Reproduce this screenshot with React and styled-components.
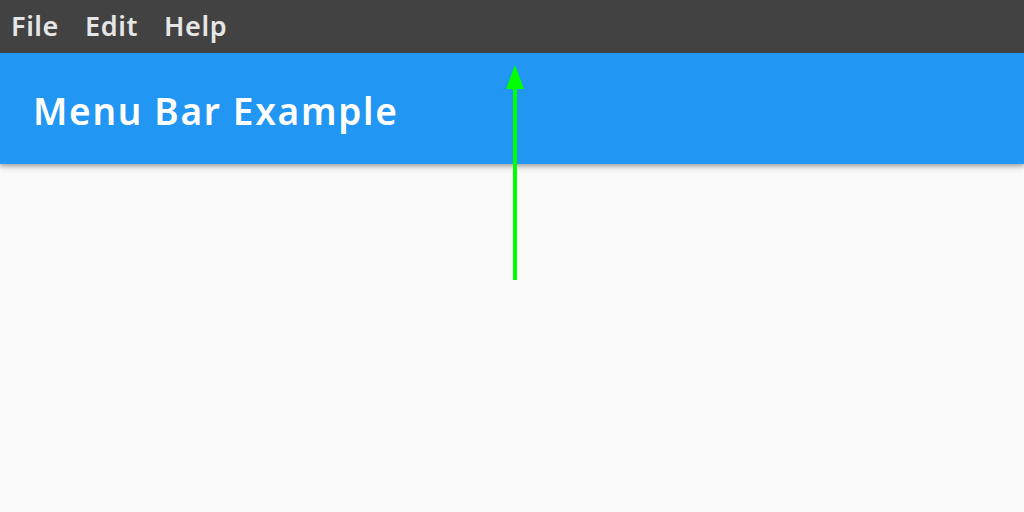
import React from 'react';
import styled, { createGlobalStyle } from 'styled-components';

const GlobalStyle = createGlobalStyle`
  html, body {
    margin: 0;
    padding: 0;
    background: #fafafa;
    font-family: "Noto Sans", "Open Sans", sans-serif;
  }
`;

const Page = styled.div`
  position: relative;
  width: 1024px;
  height: 512px;
  overflow: hidden;
  display: flex;
  flex-direction: column;
  background: #fafafa;
`;

const MenuBar = styled.nav`
  height: 53px;
  background: #424242;
  display: flex;
  align-items: center;
  gap: 26px;
  padding: 0 0 2px 11px;
  box-sizing: border-box;
`;

const MenuItem = styled.span`
  color: #e6e6e6;
  font-size: 27px;
  font-weight: 600;
  letter-spacing: 0.6px;
`;

const AppBar = styled.header`
  height: 111px;
  background: #2196f3;
  display: flex;
  align-items: center;
  padding: 4px 0 0 33px;
  box-sizing: border-box;
  box-shadow: 0 2px 4px rgba(0, 0, 0, 0.25), 0 4px 6px rgba(0, 0, 0, 0.12);
  position: relative;
  z-index: 1;
`;

const Title = styled.h1`
  margin: 0;
  color: #ffffff;
  font-size: 37px;
  font-weight: 600;
  letter-spacing: 1.7px;
`;

const Arrow = styled.svg`
  position: absolute;
  left: 500px;
  top: 60px;
  z-index: 2;
`;

const App = () => {
  return (
    <Page>
      <GlobalStyle />
      <MenuBar>
        <MenuItem>File</MenuItem>
        <MenuItem>Edit</MenuItem>
        <MenuItem>Help</MenuItem>
      </MenuBar>
      <AppBar>
        <Title>Menu Bar Example</Title>
      </AppBar>
      <Arrow width="30" height="230" viewBox="0 0 30 230">
        <polygon points="15,5 6,29 24,29" fill="#00ff00" />
        <rect x="13" y="28" width="4" height="192" fill="#00ff00" />
      </Arrow>
    </Page>
  );
};

export default App;
